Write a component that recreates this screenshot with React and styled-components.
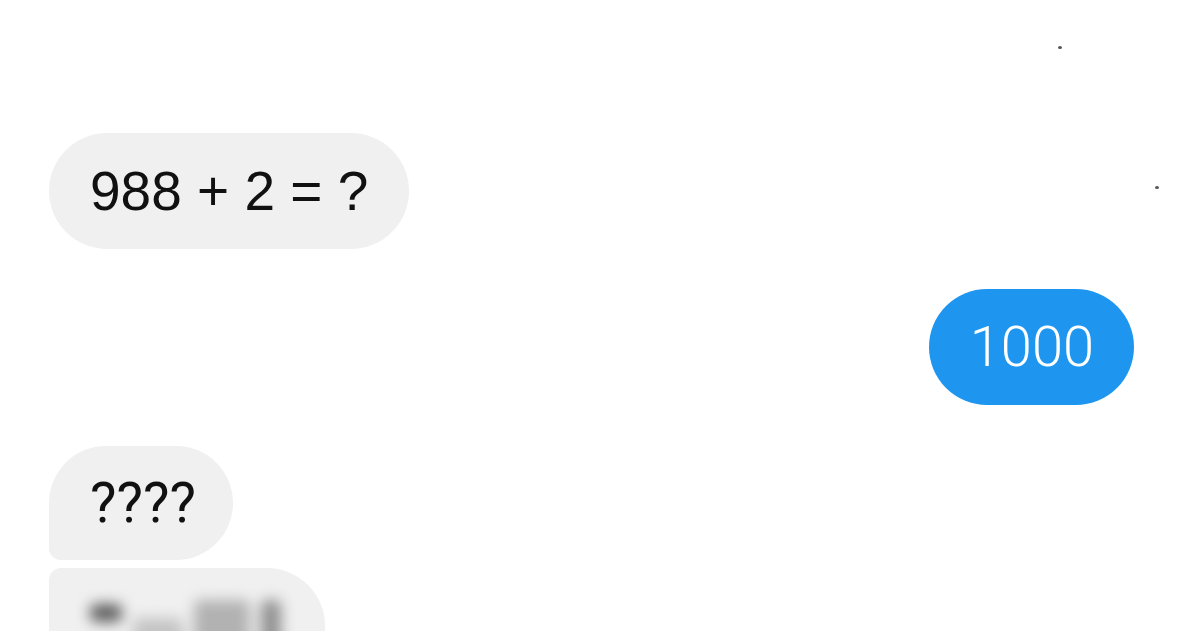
import React from "react";
import styled, { createGlobalStyle } from "styled-components";

const Global = createGlobalStyle`
  html, body { margin: 0; padding: 0; background: #ffffff; }
  body { font-family: "Liberation Sans", "Roboto", sans-serif; overflow: hidden; }
`;

const Screen = styled.div`
  position: relative;
  width: 1200px;
  height: 631px;
  overflow: hidden;
  background: #ffffff;
`;

const Thread = styled.div`
  display: flex;
  flex-direction: column;
  padding: 133px 66px 0 49px;
`;

const Row = styled.div`
  display: flex;
  justify-content: ${(p) => (p.$mine ? "flex-end" : "flex-start")};
  margin-top: ${(p) => p.$gap || 0}px;
`;

const faces = {
  sans: '"Liberation Sans", "Roboto", sans-serif',
  round: '"Roboto", "Liberation Sans", sans-serif',
};

const Bubble = styled.div`
  display: flex;
  align-items: ${(p) => p.$align || "center"};
  height: ${(p) => p.$height || 116}px;
  padding: 0 ${(p) => p.$padR || 41}px 0 41px;
  box-sizing: border-box;
  border-radius: ${(p) => p.$radius || "58px"};
  background: ${(p) => (p.$mine ? "#1e96f0" : "#f0f0f0")};
  color: ${(p) => (p.$mine ? "#ffffff" : "#111111")};
  font-family: ${(p) => faces[p.$face || (p.$mine ? "round" : "sans")]};
  font-size: ${(p) => (p.$mine || p.$face === "round" ? 56 : 55)}px;
  font-weight: ${(p) => (p.$mine ? 300 : 400)};
  letter-spacing: ${(p) => p.$track || 0}px;
  white-space: nowrap;
`;

const HiddenLine = styled.div`
  display: flex;
  align-items: flex-start;
  gap: 11px;
  width: 194px;
  height: 90px;
  padding-top: 32px;
  filter: blur(7px);
`;

const Smudge = styled.span`
  display: block;
  flex-shrink: 0;
  width: ${(p) => p.$w}px;
  height: ${(p) => p.$h}px;
  margin-top: ${(p) => p.$top}px;
  background: ${(p) => p.$tone};
  border-radius: 6px;
`;

const Speck = styled.span`
  position: absolute;
  left: ${(p) => p.$x}px;
  top: ${(p) => p.$y}px;
  width: 4px;
  height: 3px;
  border-radius: 50%;
  background: #555;
  filter: blur(0.7px);
`;

export default function App() {
  return (
    <Screen>
      <Global />
      <Thread>
        <Row>
          <Bubble>988 + 2 = ?</Bubble>
        </Row>
        <Row $mine $gap={40}>
          <Bubble $mine $padR={40}>1000</Bubble>
        </Row>
        <Row $gap={41}>
          <Bubble $height={114} $face="round" $radius="58px 58px 58px 12px" $padR={37}>
            ????
          </Bubble>
        </Row>
        <Row $gap={8}>
          <Bubble $height={140} $align="flex-start" $radius="12px 58px 58px 58px">
            <HiddenLine>
              <Smudge $w={32} $h={18} $top={4} $tone="#5e5e5e" />
              <Smudge $w={50} $h={50} $top={18} $tone="#c4c4c4" />
              <Smudge $w={56} $h={50} $top={0} $tone="#b2b2b2" />
              <Smudge $w={20} $h={50} $top={0} $tone="#909090" />
            </HiddenLine>
          </Bubble>
        </Row>
      </Thread>
      <Speck $x={1058} $y={46} />
      <Speck $x={1155} $y={186} />
    </Screen>
  );
}
